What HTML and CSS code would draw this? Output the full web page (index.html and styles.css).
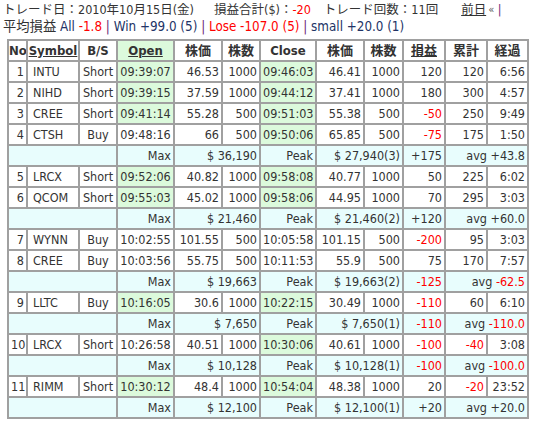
FILE: index.html
```html
<!DOCTYPE html>
<html lang="ja">
<head>
<meta charset="utf-8">
<link rel="stylesheet" href="styles.css">
</head>
<body>
<div class="info">
  <div class="line first">トレード日：2010年10月15日(金)<span class="sp"></span>損益合計($)：<span class="neg">-20</span><span class="sp3"></span>トレード回数：11回<span class="sp2"></span><a class="link" href="#">前日</a><span class="nav">«</span> <span class="bar">|</span></div>
  <div class="line">平均損益 <span class="blue">All</span> <span class="neg">-1.8</span> <span class="bar">|</span> <span class="blue">Win +99.0 (5)</span> <span class="bar">|</span> <span class="neg">Lose -107.0 (5)</span> <span class="bar">|</span> <span class="blue">small +20.0 (1)</span></div>
</div>
<table class="trades">
  <colgroup>
    <col class="c-no"><col class="c-sym"><col class="c-bs"><col class="c-time"><col class="c-price"><col class="c-qty"><col class="c-time2"><col class="c-price"><col class="c-qty2"><col class="c-pl"><col class="c-cum"><col class="c-el">
  </colgroup>
  <thead>
    <tr>
      <th>No</th><th><a class="link" href="#">Symbol</a></th><th>B/S</th><th class="g"><a class="link" href="#">Open</a></th><th>株価</th><th>株数</th><th>Close</th><th>株価</th><th>株数</th><th><a class="link" href="#">損益</a></th><th>累計</th><th>経過</th>
    </tr>
  </thead>
  <tbody>
    <tr><td class="r">1</td><td class="l">INTU</td><td class="c">Short</td><td class="g c">09:39:07</td><td class="r">46.53</td><td class="r">1000</td><td class="g c">09:46:03</td><td class="r">46.41</td><td class="r">1000</td><td class="r">120</td><td class="r">120</td><td class="r">6:56</td></tr>
    <tr><td class="r">2</td><td class="l">NIHD</td><td class="c">Short</td><td class="g c">09:39:15</td><td class="r">37.59</td><td class="r">1000</td><td class="g c">09:44:12</td><td class="r">37.41</td><td class="r">1000</td><td class="r">180</td><td class="r">300</td><td class="r">4:57</td></tr>
    <tr><td class="r">3</td><td class="l">CREE</td><td class="c">Short</td><td class="g c">09:41:14</td><td class="r">55.28</td><td class="r">500</td><td class="g c">09:51:03</td><td class="r">55.38</td><td class="r">500</td><td class="r neg">-50</td><td class="r">250</td><td class="r">9:49</td></tr>
    <tr><td class="r">4</td><td class="l">CTSH</td><td class="c">Buy</td><td class="c">09:48:16</td><td class="r">66</td><td class="r">500</td><td class="g c">09:50:06</td><td class="r">65.85</td><td class="r">500</td><td class="r neg">-75</td><td class="r">175</td><td class="r">1:50</td></tr>
    <tr class="sum"><td colspan="3"></td><td class="r">Max</td><td colspan="2" class="r">$ 36,190</td><td class="r">Peak</td><td colspan="2" class="r">$ 27,940(3)</td><td class="r">+175</td><td colspan="2" class="r">avg +43.8</td></tr>
    <tr><td class="r">5</td><td class="l">LRCX</td><td class="c">Short</td><td class="g c">09:52:06</td><td class="r">40.82</td><td class="r">1000</td><td class="g c">09:58:08</td><td class="r">40.77</td><td class="r">1000</td><td class="r">50</td><td class="r">225</td><td class="r">6:02</td></tr>
    <tr><td class="r">6</td><td class="l">QCOM</td><td class="c">Short</td><td class="g c">09:55:03</td><td class="r">45.02</td><td class="r">1000</td><td class="g c">09:58:06</td><td class="r">44.95</td><td class="r">1000</td><td class="r">70</td><td class="r">295</td><td class="r">3:03</td></tr>
    <tr class="sum"><td colspan="3"></td><td class="r">Max</td><td colspan="2" class="r">$ 21,460</td><td class="r">Peak</td><td colspan="2" class="r">$ 21,460(2)</td><td class="r">+120</td><td colspan="2" class="r">avg +60.0</td></tr>
    <tr><td class="r">7</td><td class="l">WYNN</td><td class="c">Buy</td><td class="c">10:02:55</td><td class="r">101.55</td><td class="r">500</td><td class="c">10:05:58</td><td class="r">101.15</td><td class="r">500</td><td class="r neg">-200</td><td class="r">95</td><td class="r">3:03</td></tr>
    <tr><td class="r">8</td><td class="l">CREE</td><td class="c">Buy</td><td class="c">10:03:56</td><td class="r">55.75</td><td class="r">500</td><td class="c">10:11:53</td><td class="r">55.9</td><td class="r">500</td><td class="r">75</td><td class="r">170</td><td class="r">7:57</td></tr>
    <tr class="sum"><td colspan="3"></td><td class="r">Max</td><td colspan="2" class="r">$ 19,663</td><td class="r">Peak</td><td colspan="2" class="r">$ 19,663(2)</td><td class="r neg">-125</td><td colspan="2" class="r">avg <span class="neg">-62.5</span></td></tr>
    <tr><td class="r">9</td><td class="l">LLTC</td><td class="c">Buy</td><td class="g c">10:16:05</td><td class="r">30.6</td><td class="r">1000</td><td class="g c">10:22:15</td><td class="r">30.49</td><td class="r">1000</td><td class="r neg">-110</td><td class="r">60</td><td class="r">6:10</td></tr>
    <tr class="sum"><td colspan="3"></td><td class="r">Max</td><td colspan="2" class="r">$ 7,650</td><td class="r">Peak</td><td colspan="2" class="r">$ 7,650(1)</td><td class="r neg">-110</td><td colspan="2" class="r">avg <span class="neg">-110.0</span></td></tr>
    <tr><td class="r">10</td><td class="l">LRCX</td><td class="c">Short</td><td class="c">10:26:58</td><td class="r">40.51</td><td class="r">1000</td><td class="g c">10:30:06</td><td class="r">40.61</td><td class="r">1000</td><td class="r neg">-100</td><td class="r neg">-40</td><td class="r">3:08</td></tr>
    <tr class="sum"><td colspan="3"></td><td class="r">Max</td><td colspan="2" class="r">$ 10,128</td><td class="r">Peak</td><td colspan="2" class="r">$ 10,128(1)</td><td class="r neg">-100</td><td colspan="2" class="r">avg <span class="neg">-100.0</span></td></tr>
    <tr><td class="r">11</td><td class="l">RIMM</td><td class="c">Short</td><td class="g c">10:30:12</td><td class="r">48.4</td><td class="r">1000</td><td class="g c">10:54:04</td><td class="r">48.38</td><td class="r">1000</td><td class="r">20</td><td class="r neg">-20</td><td class="r">23:52</td></tr>
    <tr class="sum"><td colspan="3"></td><td class="r">Max</td><td colspan="2" class="r">$ 12,100</td><td class="r">Peak</td><td colspan="2" class="r">$ 12,100(1)</td><td class="r">+20</td><td colspan="2" class="r">avg +20.0</td></tr>
  </tbody>
</table>
</body>
</html>
```
FILE: styles.css
```css
body {
  margin: 1px 0 0 3px;
  font-family: "DejaVu Sans Condensed", "DejaVu Sans", "Noto Sans CJK JP", sans-serif;
  font-stretch: condensed;
  color: #333;
  font-size: 13.3px;
  background: #fff;
}
.info .line {
  height: 17px;
  line-height: 17px;
  white-space: nowrap;
}
.info .first { font-size: 12.5px; }
.sp { display: inline-block; width: 20px; }
.sp3 { display: inline-block; width: 13px; }
.sp2 { display: inline-block; width: 23px; }
.neg { color: #f00; }
.blue { color: #223366; }
.bar { color: #6a2a7a; }
.nav { color: #555; font-size: 11px; margin-left: 2px; vertical-align: 1px; }
.link { color: #333; text-decoration: underline; }
.trades {
  margin: 4px 0 0 4px;
  border-collapse: separate;
  border-spacing: 0;
  border: 1px solid #a0a0a0;
  table-layout: fixed;
  width: 521px;
  font-size: 12.5px;
}
.trades th, .trades td {
  border: 1px solid #a0a0a0;
  height: 17px;
  line-height: 17px;
  padding: 1px 2px;
  white-space: nowrap;
  overflow: hidden;
}
.trades th {
  font-weight: bold;
  text-align: center;
  font-size: 13px;
  padding: 1px 0;
}
.c-no { width: 19px; }
.c-sym { width: 52px; }
.c-bs { width: 38px; }
.c-time { width: 57px; }
.c-price { width: 48px; }
.c-qty { width: 38px; }
.c-time2 { width: 56px; }
.c-qty2 { width: 39px; }
.c-pl { width: 42px; }
.c-cum { width: 42px; }
.c-el { width: 41px; }
.r { text-align: right; }
.l { text-align: left; padding-left: 5px !important; }
.c { text-align: center; }
.g { background: #dcfadc; }
.sum td { background: #e8fdfd; }
```
